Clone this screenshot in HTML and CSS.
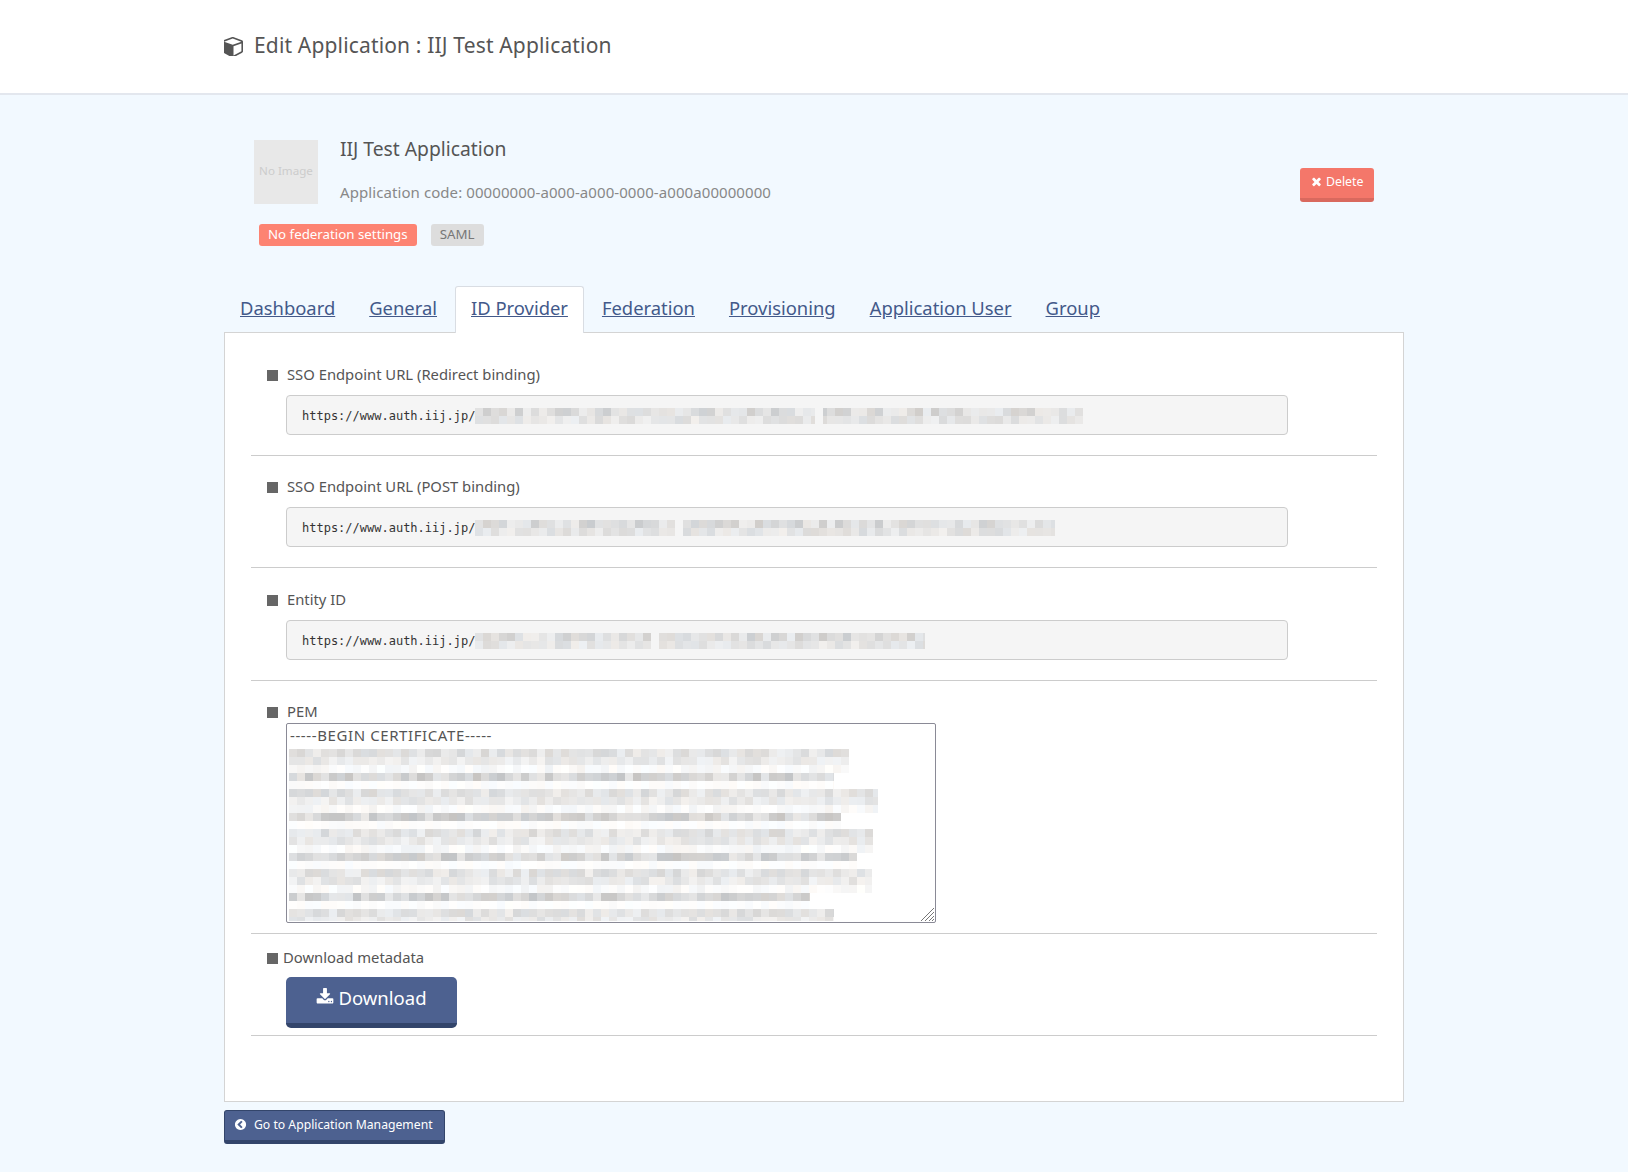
FILE: index.html
```html
<!DOCTYPE html>
<html lang="en">
<head>
    <meta charset="UTF-8">
    <meta name="viewport" content="width=device-width, initial-scale=1.0">
    <title>Edit Application</title>
    <link rel="stylesheet" href="styles.css">
</head>
<body>
    <header class="page-header">
        <h1 class="page-title">
            <svg class="icon-cube" viewBox="128 128 1536 1536"><path d="M896 1629l640-349v-636l-640 233v752zm-64-865l698-254-698-254-698 254zm832-252v768q0 35-18 65t-49 48l-704 384q-28 16-61 16t-61-16l-704-384q-31-18-49-48t-18-65v-768q0-40 23-73t61-49l704-256q22-8 44-8t44 8l704 256q38 16 61 49t23 73z"/></svg>
            Edit Application : IIJ Test Application
        </h1>
    </header>

    <main class="container">
        <section class="app-info">
            <div class="app-summary">
                <div class="app-top">
                    <div class="no-image">No Image</div>
                    <div class="app-text">
                        <h2 class="app-name">IIJ Test Application</h2>
                        <p class="app-code">Application code: 00000000-a000-a000-0000-a000a00000000</p>
                    </div>
                </div>
                <div class="badges">
                    <span class="badge badge-red">No federation settings</span>
                    <span class="badge badge-gray">SAML</span>
                </div>
            </div>
            <a class="btn btn-delete" href="#">
                <svg class="icon-sm" viewBox="0 0 1792 1792"><path d="M1490 1322q0 40-28 68l-136 136q-28 28-68 28t-68-28l-294-294-294 294q-28 28-68 28t-68-28l-136-136q-28-28-28-68t28-68l294-294-294-294q-28-28-28-68t28-68l136-136q28-28 68-28t68 28l294 294 294-294q28-28 68-28t68 28l136 136q28 28 28 68t-28 68l-294 294 294 294q28 28 28 68z"/></svg>
                Delete
            </a>
        </section>

        <ul class="tabs">
            <li><a href="#">Dashboard</a></li>
            <li><a href="#">General</a></li>
            <li class="active"><a href="#">ID Provider</a></li>
            <li><a href="#">Federation</a></li>
            <li><a href="#">Provisioning</a></li>
            <li><a href="#">Application User</a></li>
            <li><a href="#">Group</a></li>
        </ul>

        <section class="panel">
            <div class="field">
                <div class="field-label"><span class="square"></span>SSO Endpoint URL (Redirect binding)</div>
                <div class="url-box">https://www.auth.iij.jp/<canvas class="mosaic" width="608" height="16" data-seed="11" data-gap="340"></canvas></div>
            </div>
            <div class="field">
                <div class="field-label"><span class="square"></span>SSO Endpoint URL (POST binding)</div>
                <div class="url-box">https://www.auth.iij.jp/<canvas class="mosaic" width="580" height="16" data-seed="29" data-gap="200"></canvas></div>
            </div>
            <div class="field field-entity">
                <div class="field-label"><span class="square"></span>Entity ID</div>
                <div class="url-box">https://www.auth.iij.jp/<canvas class="mosaic" width="450" height="16" data-seed="47" data-gap="176"></canvas></div>
            </div>
            <div class="field field-pem">
                <div class="field-label field-label-tight"><span class="square"></span>PEM</div>
                <div class="pem-wrap">
                    <textarea class="pem" readonly>-----BEGIN CERTIFICATE-----</textarea>
                    <canvas class="pem-mosaic" width="592" height="172"></canvas>
                    <svg class="pem-grip" viewBox="0 0 16 16"><path d="M15 2L2 15M15 6L6 15M15 10L10 15M15 13L13 15"/></svg>
                </div>
            </div>
            <div class="field field-download">
                <div class="field-label field-label-close"><span class="square"></span>Download metadata</div>
                <a class="btn btn-download" href="#">
                    <svg class="icon-dl" viewBox="0 0 1792 1792"><path d="M1344 1344q0-26-19-45t-45-19-45 19-19 45 19 45 45 19 45-19 19-45zm256 0q0-26-19-45t-45-19-45 19-19 45 19 45 45 19 45-19 19-45zm128-224v320q0 40-28 68t-68 28h-1472q-40 0-68-28t-28-68v-320q0-40 28-68t68-28h465l135 136q58 56 136 56t136-56l136-136h464q40 0 68 28t28 68zm-325-569q17 41-14 70l-448 448q-18 19-45 19t-45-19l-448-448q-31-29-14-70 17-39 59-39h256v-448q0-26 19-45t45-19h256q26 0 45 19t19 45v448h256q42 0 59 39z"/></svg>
                    Download
                </a>
            </div>
        </section>

        <a class="btn btn-back" href="#">
            <svg class="icon-sm" viewBox="0 0 1792 1792"><path d="M1037 1395l102-102q19-19 19-45t-19-45l-307-307 307-307q19-19 19-45t-19-45l-102-102q-19-19-45-19t-45 19l-454 454q-19 19-19 45t19 45l454 454q19 19 45 19t45-19zm627-499q0 209-103 385.5t-279.5 279.5-385.5 103-385.5-103-279.5-279.5-103-385.5 103-385.5 279.5-279.5 385.5-103 385.5 103 279.5 279.5 103 385.5z"/></svg>
            Go to Application Management
        </a>
    </main>

    <script src="script.js"></script>
</body>
</html>
```
FILE: styles.css
```css
/* General */
body {
    margin: 0;
    height: 1172px;
    overflow: hidden;
    font-family: "Noto Sans", Arial, sans-serif;
    background-color: #f2f9ff;
    color: #555;
}

/* Header */
.page-header {
    height: 93px;
    background-color: #fff;
    border-bottom: 2px solid #e3e7ee;
    display: flex;
    align-items: center;
    padding-left: 224px;
}

.page-title {
    margin: 0 0 3px;
    font-size: 21px;
    font-weight: normal;
    letter-spacing: 0.16px;
    display: flex;
    align-items: center;
    gap: 11px;
}

.icon-cube {
    width: 19px;
    height: 19px;
    margin-top: 2px;
    fill: #555;
}

.container {
    width: 1180px;
    margin-left: 224px;
}

/* Application info */
.app-info {
    display: flex;
    justify-content: space-between;
    align-items: center;
    padding: 45px 30px 0;
}

.app-top {
    display: flex;
    gap: 22px;
}

.no-image {
    width: 64px;
    height: 64px;
    line-height: 62px;
    text-align: center;
    background-color: #e8e8e8;
    color: #ccc;
    font-size: 11.6px;
    white-space: nowrap;
}

.app-name {
    margin: 0;
    font-size: 19.3px;
    font-weight: normal;
    line-height: 17px;
}

.app-code {
    margin: 26px 0 0;
    font-size: 15px;
    letter-spacing: 0.08px;
    line-height: 18px;
    color: #888;
}

.badges {
    display: flex;
    gap: 14px;
    margin: 20px 0 0 5px;
}

.badge {
    height: 22px;
    line-height: 21px;
    padding: 0 9px;
    border-radius: 3px;
    font-size: 13.3px;
}

.badge-red {
    background-color: #fd8372;
    color: #fff;
}

.badge-gray {
    background-color: #ddd;
    color: #777;
}

/* Buttons */
.btn {
    display: flex;
    align-items: center;
    box-sizing: border-box;
    text-decoration: none;
    color: #fff;
    border-radius: 3px;
    white-space: nowrap;
}

.icon-sm {
    width: 13px;
    height: 13px;
    fill: #fff;
    flex: none;
}

.btn-delete {
    width: 74px;
    height: 34px;
    margin: -16px 0 0;
    padding: 0 0 4px 10px;
    gap: 3px;
    font-size: 12.3px;
    background-color: #f4776a;
    border-bottom: 4px solid #d9695e;
}

/* Tabs */
.tabs {
    list-style: none;
    display: flex;
    gap: 2px;
    margin: 40px 0 0;
    padding: 0;
}

.tabs li {
    height: 47px;
    box-sizing: border-box;
    padding: 0 15px;
    line-height: 42px;
    font-size: 18.4px;
    border: 1px solid transparent;
    border-bottom: 0;
    margin-bottom: -1px;
    position: relative;
}

.tabs li.active {
    background-color: #fff;
    border-color: #d9dde3;
    border-radius: 3px 3px 0 0;
}

.tabs a {
    color: #43598a;
}

/* Panel */
.panel {
    box-sizing: border-box;
    height: 770px;
    margin-top: 0;
    padding: 11px 26px 0;
    background-color: #fff;
    border: 1px solid #d4d4d4;
}

.field {
    padding: 20px 0 20px 16px;
    border-bottom: 1px solid #ccc;
}

.field-label {
    display: flex;
    align-items: center;
    height: 20px;
    margin-bottom: 11px;
    font-size: 14.8px;
}

.field-label-tight {
    margin-bottom: 2px;
}

.field-label-close {
    margin-bottom: 10px;
}

.square {
    width: 11px;
    height: 11px;
    margin: 2px 9px 0 0;
    background-color: #666;
    flex: none;
}

.field-label-close .square {
    margin-right: 5px;
}

.url-box {
    box-sizing: border-box;
    display: flex;
    align-items: center;
    height: 40px;
    margin-left: 19px;
    width: 1002px;
    padding: 2px 0 0 15px;
    background-color: #f5f5f5;
    border: 1px solid #ccc;
    border-radius: 4px;
    font-family: "DejaVu Sans Mono", monospace;
    font-size: 12px;
    color: #333;
}

.field-entity {
    padding-top: 21px;
}

.mosaic {
    display: block;
}

.field-pem {
    padding: 20px 0 10px 16px;
}

.pem-wrap {
    position: relative;
    margin-left: 19px;
    width: 650px;
    height: 200px;
}

.pem {
    box-sizing: border-box;
    display: block;
    width: 650px;
    height: 200px;
    margin: 0;
    padding: 1px 3px;
    border: 1px solid #8a8a96;
    border-radius: 2px;
    font-family: "Noto Sans", Arial, sans-serif;
    font-size: 15px;
    letter-spacing: 0.6px;
    line-height: 20px;
    color: #555;
    background-color: #fff;
    outline: none;
    resize: none;
}

.pem-mosaic {
    position: absolute;
    left: 3px;
    top: 26px;
    pointer-events: none;
}

.pem-grip {
    position: absolute;
    right: 1px;
    bottom: 1px;
    width: 16px;
    height: 16px;
    fill: none;
    stroke: #777;
    stroke-width: 1;
}

.field-download {
    padding: 13px 0 7px 16px;
}

.btn-download {
    justify-content: center;
    width: 171px;
    height: 51px;
    margin-left: 19px;
    padding-bottom: 5px;
    gap: 4px;
    font-size: 18.5px;
    background-color: #4d6190;
    border-bottom: 5px solid #33456b;
    border-radius: 5px;
}

.icon-dl {
    width: 18px;
    height: 18px;
    fill: #fff;
    margin-top: -1px;
}

.btn-back {
    width: 221px;
    height: 34px;
    margin-top: 8px;
    padding: 0 0 3px 9px;
    gap: 7px;
    font-size: 12.2px;
    background-color: #4d6190;
    border: 1px solid #33456b;
    border-bottom-width: 4px;
}
```
FILE: script.js
```js
// fills the masked parts of the urls and the certificate with grey blocks
var CELL = 8;

function makeRandom(seed) {
    return function () {
        seed = (seed * 16807) % 2147483647;
        return (seed % 1000) / 1000;
    };
}

function drawRow(ctx, rnd, y, width, low, high) {
    for (var x = 0; x < width; x += CELL) {
        var g = Math.round(low + rnd() * (high - low));
        var tint = Math.round(rnd() * 6) - 3;
        ctx.fillStyle = "rgb(" + (g + tint) + "," + g + "," + (g - tint) + ")";
        ctx.fillRect(x, y, Math.min(CELL, width - x), CELL);
    }
}

document.querySelectorAll(".mosaic").forEach(function (canvas) {
    var ctx = canvas.getContext("2d");
    var rnd = makeRandom(Number(canvas.dataset.seed) * 1000 + 7);
    var gap = Number(canvas.dataset.gap);
    drawRow(ctx, rnd, 0, canvas.width, 204, 238);
    drawRow(ctx, rnd, CELL, canvas.width, 218, 240);
    ctx.clearRect(gap, 0, CELL, 16);
});

var pem = document.querySelector(".pem-mosaic");
var pemCtx = pem.getContext("2d");
var pemRnd = makeRandom(4242);
// right edge of the light and the dark rows of each pair of lines
var pemWidths = [[560, 545], [589, 552], [584, 568], [583, 521], [545, 0]];

pemWidths.forEach(function (w, i) {
    var top = i * 40;
    drawRow(pemCtx, pemRnd, top, w[0], 214, 240);
    drawRow(pemCtx, pemRnd, top + 8, w[0], 222, 244);
    drawRow(pemCtx, pemRnd, top + 16, w[0], 242, 255);
    drawRow(pemCtx, pemRnd, top + 24, w[1], 196, 232);
    drawRow(pemCtx, pemRnd, top + 32, w[1], 250, 255);
});
```
